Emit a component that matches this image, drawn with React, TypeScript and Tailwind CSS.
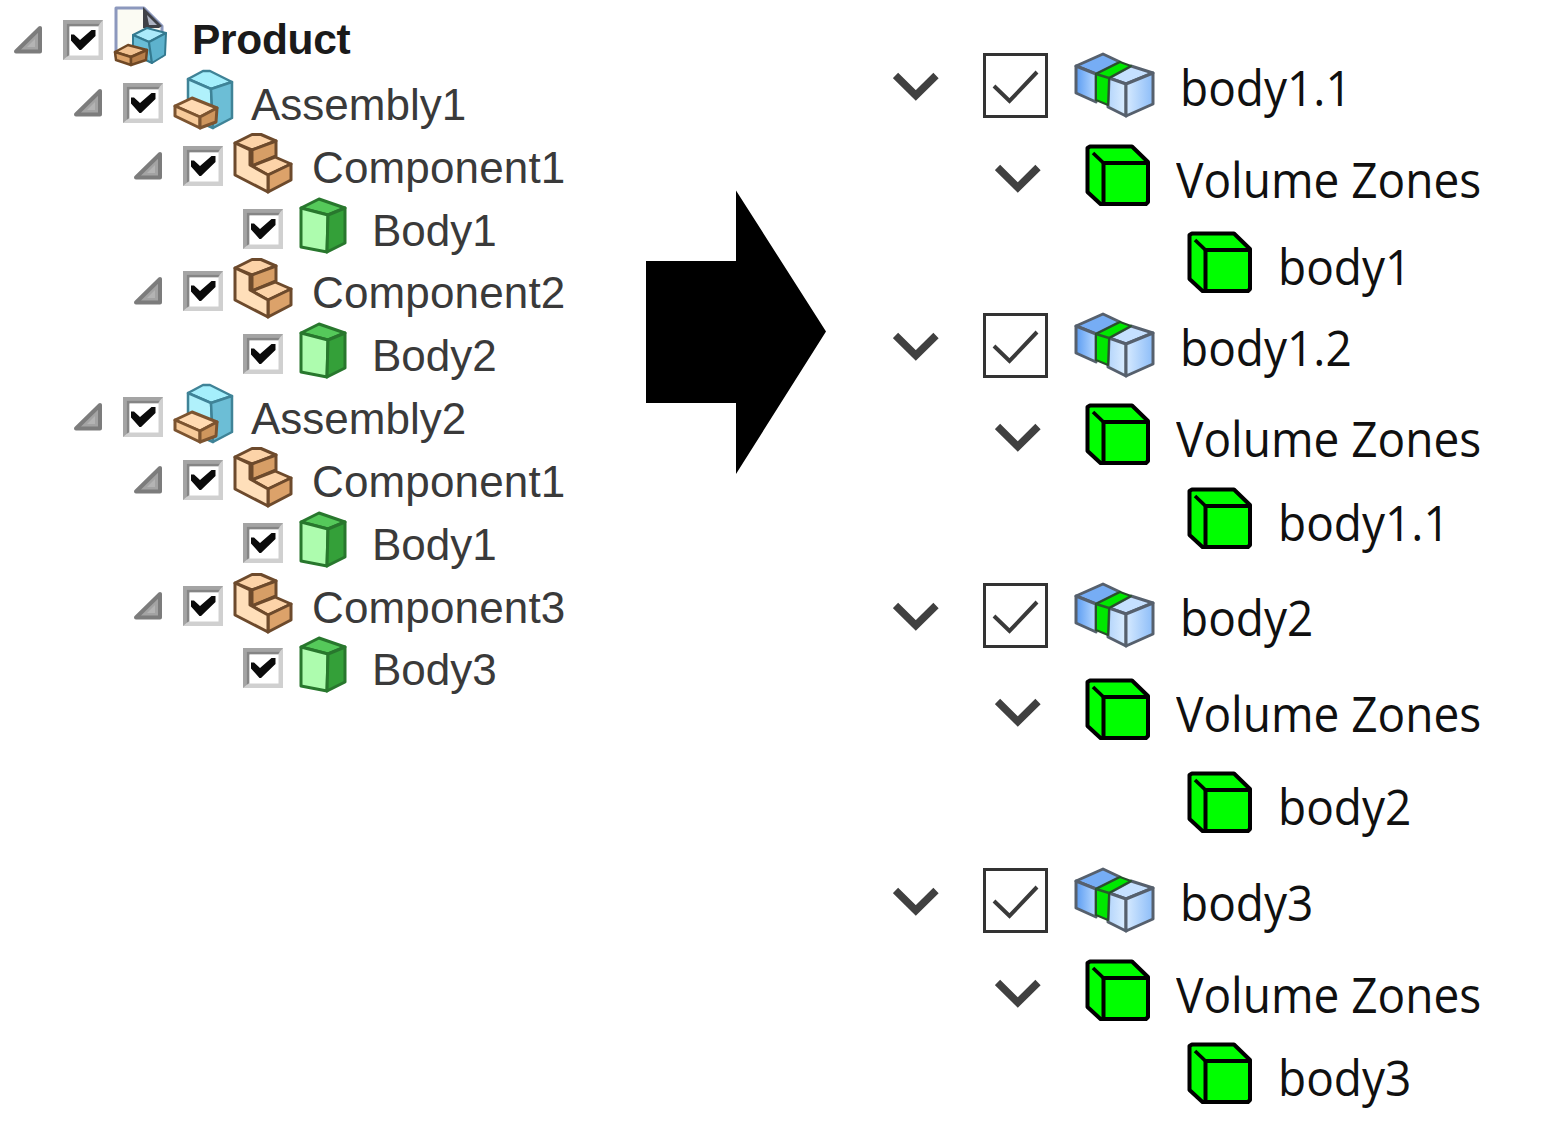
import React from "react";

type Kind = "product" | "assembly" | "component" | "body";

function Expander() {
  return (
    <svg className="shrink-0" width="30" height="30" viewBox="0 0 30 30">
      <path d="M3 26.5 L27 3 V26.5 Z" fill="#a3a3a3" stroke="#7c7c7c" strokeWidth="4" strokeLinejoin="round" />
      <path d="M14 22 L22 14 V22 Z" fill="#b4b4b4" />
    </svg>
  );
}

function ClassicCheck() {
  return (
    <svg width="42" height="42" viewBox="0 0 42 42" className="shrink-0">
      <rect x="1" y="1" width="40" height="40" fill="#d0d0d0" />
      <path d="M1 41 V1 H41 L38 4.500 H4.500 V38 Z" fill="#a4a4a4" />
      <path d="M4.500 38 V4.500 H38 L36 7.500 H7.500 V36 Z" fill="#858585" />
      <rect x="7.500" y="7.500" width="29" height="29" fill="#fff" />
      <path d="M9 15.500 L12 15.500 L18 21 L29.500 11 L33.500 11 V17 L19 31 L17.500 31 L9 21.500 Z" fill="#0a0a0a" />
    </svg>
  );
}

function ProductIcon() {
  return (
    <svg width="60" height="62" viewBox="0 0 60 62" strokeLinejoin="round" className="shrink-0">
      <path d="M3 2 H31 L49 20 V50 H3 Z" fill="#fbfbf3" stroke="#8c98bd" strokeWidth="3" />
      <path d="M30 1 L49 20 L46 22 H30 Z" fill="#3f4146" />
      <path d="M34 9 L44 19 H36 Z" fill="#aeb4c2" />
      <g stroke="#347a90" strokeWidth="2">
        <path d="M20 29 L34 22 L53 27 L36 36 Z" fill="#abeafa" />
        <path d="M20 29 L36 36 L39 57 L20 48 Z" fill="#69bdd6" />
        <path d="M36 36 L53 27 L52 49 L39 57 Z" fill="#5db2cd" />
      </g>
      <g stroke="#6f4825" strokeWidth="2.500">
        <path d="M2 46 L15 39 L34 44 L18 51 Z" fill="#f2c291" />
        <path d="M2 46 L18 51 V59 L3 54 Z" fill="#dca36a" />
        <path d="M18 51 L34 44 L33 54 L18 59 Z" fill="#b87f4a" />
      </g>
    </svg>
  );
}

function AssemblyIcon() {
  return (
    <svg width="61" height="61" viewBox="0 0 61 61" strokeLinejoin="round" className="shrink-0">
      <g stroke="#3f8397" strokeWidth="2.500">
        <path d="M15 10 L30 2 H37 L59 13 L38 20 Z" fill="#a5effc" />
        <path d="M15 10 L38 20 L40 59 L15 48 Z" fill="#b0f1fb" />
        <path d="M38 20 L59 13 V49 L40 59 Z" fill="#6cbed6" />
      </g>
      <g stroke="#7c5430" strokeWidth="3">
        <path d="M2 37 L19 29 L44 39 L27 48 Z" fill="#ffdab2" />
        <path d="M2 37 L27 48 V59 L2 47 Z" fill="#f7cb9b" />
        <path d="M27 48 L44 39 L43 53 L27 59 Z" fill="#cf965d" />
      </g>
    </svg>
  );
}

function ComponentIcon() {
  return (
    <svg
      width="60"
      height="62"
      viewBox="0 0 60 62"
      strokeLinejoin="round"
      stroke="#6d4a2c"
      strokeWidth="3"
      className="shrink-0"
    >
      <path d="M2 11 L19 2.500 H28 L43 9 L19 18 Z" fill="#fcd3a8" />
      <path d="M19 18 L43 9 V24 L19 34 Z" fill="#d79e66" />
      <path d="M19 34 L42 25 L58 32 L35 43 Z" fill="#fcd3a8" />
      <path d="M35 43 L58 32 V48 L35 60 Z" fill="#dca26a" />
      <path d="M2 11 L17 18 V33 L35 43 V60 L2 43 Z" fill="#ffdfba" />
    </svg>
  );
}

function BodyIcon() {
  return (
    <svg
      width="48"
      height="57"
      viewBox="0 0 48 57"
      strokeLinejoin="round"
      stroke="#28772d"
      strokeWidth="3"
      className="shrink-0"
    >
      <path d="M2 11 L20 2 L46 11 L29 18 Z" fill="#55c95a" />
      <path d="M2 11 L29 18 L28 55 L2 50 Z" fill="#adfcae" />
      <path d="M29 18 L46 11 V46 L28 55 Z" fill="#34a039" />
    </svg>
  );
}

function Chevron() {
  return (
    <svg width="46" height="30" viewBox="0 0 46 30" fill="none" stroke="#404040" strokeWidth="7.500">
      <path d="M2.500 3.500 L22.800 23.500 L43 3.500" />
    </svg>
  );
}

function FlatCheck() {
  return (
    <div className="flex size-[65px] shrink-0 items-center justify-center border-3 border-[#333]">
      <svg width="59" height="59" viewBox="0 0 59 59" fill="none" stroke="#3a3a3a" strokeWidth="4">
        <path d="M8 30 L23.500 45 L51 16" />
      </svg>
    </div>
  );
}

function MeshBodyIcon() {
  return (
    <svg width="83" height="69" viewBox="0 0 83 69" strokeLinejoin="round">
      <defs>
        <linearGradient id="deep">
          <stop offset="0" stopColor="#5b9cf2" />
          <stop offset="1" stopColor="#b8d9ff" />
        </linearGradient>
        <linearGradient id="light">
          <stop offset="0" stopColor="#d6eaff" />
          <stop offset="1" stopColor="#8dbdf8" />
        </linearGradient>
        <linearGradient id="pale">
          <stop offset="0" stopColor="#b4d5fb" />
          <stop offset="1" stopColor="#dceeff" />
        </linearGradient>
      </defs>
      <g stroke="#56606d" strokeWidth="3">
        <path d="M3 15 L30 3 L47 11 L23 23 Z" fill="#76adf5" />
        <path d="M3 15 L23 23 V51 L3 42 Z" fill="url(#deep)" />
        <path d="M36 27 L58 15 L80 22 L53 33 Z" fill="#c5e0ff" />
        <path d="M36 27 L53 33 V65 L35 56 Z" fill="url(#pale)" />
        <path d="M53 33 L80 22 V53 L53 65 Z" fill="url(#light)" />
      </g>
      <path d="M23 23 L47 11 L58 15 L36 27 L35 54 L23 49 Z" fill="#00e800" stroke="#28502b" strokeWidth="2" />
      <path d="M23 23 L36 27" stroke="#285c2b" strokeWidth="2.500" />
    </svg>
  );
}

function ZoneIcon() {
  return (
    <svg width="66" height="64" viewBox="0 0 66 64" stroke="#000" strokeWidth="4" strokeLinejoin="round">
      <path d="M2.500 4 L5 2.500 H47 L63 18 V58 L61 60 H15.500 L2.500 48 Z" fill="#00ff00" />
      <path d="M18.500 60 V19 H63" fill="none" />
      <path d="M8 9 L18.500 19" fill="none" strokeWidth="3.600" />
    </svg>
  );
}

const indents = {
  product: "pl-[13px]",
  assembly: "pl-[73px]",
  component: "pl-[133px]",
  body: "pl-[242px]",
};

const labels = {
  product: "ml-[19px] mt-[6px] text-[42.500px] font-bold tracking-[-0.300px] text-[#1a1a1a]",
  assembly: "ml-[17px] mt-[8px] text-[44px] text-[#3a3a3a]",
  component: "ml-[19px] mt-[8px] text-[44px] tracking-[0.150px] text-[#3a3a3a]",
  body: "ml-[25px] mt-[8px] text-[44px] text-[#3a3a3a]",
};

function SourceRow({ kind, text }: { kind: Kind; text: string }) {
  return (
    <div className={`flex h-[62.850px] items-start ${indents[kind]}`}>
      {kind !== "body" && (
        <div className="mt-[16px] mr-[19px]">
          <Expander />
        </div>
      )}
      <div className="mt-[10px]">
        <ClassicCheck />
      </div>
      <div className={kind === "body" ? "mt-[-1px] ml-[15px]" : "mt-[-3px] ml-[9px]"}>
        {kind === "product" && <ProductIcon />}
        {kind === "assembly" && <AssemblyIcon />}
        {kind === "component" && <ComponentIcon />}
        {kind === "body" && <BodyIcon />}
      </div>
      <span className={`leading-[50px] whitespace-nowrap ${labels[kind]}`}>{text}</span>
    </div>
  );
}

const source: [Kind, string][] = [
  ["product", "Product"],
  ["assembly", "Assembly1"],
  ["component", "Component1"],
  ["body", "Body1"],
  ["component", "Component2"],
  ["body", "Body2"],
  ["assembly", "Assembly2"],
  ["component", "Component1"],
  ["body", "Body1"],
  ["component", "Component3"],
  ["body", "Body3"],
];

function Label({ text }: { text: string }) {
  return (
    <span className="origin-left scale-x-[0.92] text-[50px] leading-[64px] whitespace-nowrap text-[#101010]">
      {text}
    </span>
  );
}

function BodyRow({ text, gap }: { text: string; gap: string }) {
  return (
    <div className={`flex h-[64px] items-center ${gap}`}>
      <div className="pt-[4px]">
        <Chevron />
      </div>
      <div className="ml-[44px]">
        <FlatCheck />
      </div>
      <div className="mr-[24px] ml-[25px] shrink-0">
        <MeshBodyIcon />
      </div>
      <div className="flex pt-[4px]">
        <Label text={text} />
      </div>
    </div>
  );
}

function ZoneRow({ text, gap }: { text: string; gap: string }) {
  return (
    <div className={`flex h-[64px] items-center pl-[102px] ${gap}`}>
      <div className="pt-[8px]">
        <Chevron />
      </div>
      <div className="mr-[25px] ml-[44px] shrink-0 pt-[2px]">
        <ZoneIcon />
      </div>
      <div className="flex pt-[8px]">
        <Label text={text} />
      </div>
    </div>
  );
}

function LeafRow({ text, gap }: { text: string; gap: string }) {
  return (
    <div className={`flex h-[64px] items-center pl-[294px] ${gap}`}>
      <div className="mr-[25px] shrink-0 pt-[2px]">
        <ZoneIcon />
      </div>
      <div className="flex pt-[8px]">
        <Label text={text} />
      </div>
    </div>
  );
}

export default function App() {
  return (
    <main className="flex h-[1128px] w-[1561px] overflow-hidden bg-white">
      <section className="w-[646px] shrink-0 pt-[9px] font-['Liberation_Sans',sans-serif]">
        {source.map(([kind, text], i) => (
          <SourceRow key={i} kind={kind} text={text} />
        ))}
      </section>

      <svg className="mt-[190px] shrink-0" width="180" height="284" viewBox="0 0 180 284">
        <path d="M0 71 H90 V0.500 L180 141.500 L90 284 V213 H0 Z" fill="#000" />
      </svg>

      <section className="ml-[67px] font-['Open_Sans',sans-serif]">
        <BodyRow text="body1.1" gap="mt-[53px]" />
        <ZoneRow text="Volume Zones" gap="mt-[26px]" />
        <LeafRow text="body1" gap="mt-[23px]" />
        <BodyRow text="body1.2" gap="mt-[19px]" />
        <ZoneRow text="Volume Zones" gap="mt-[25px]" />
        <LeafRow text="body1.1" gap="mt-[20px]" />
        <BodyRow text="body2" gap="mt-[33px]" />
        <ZoneRow text="Volume Zones" gap="mt-[30px]" />
        <LeafRow text="body2" gap="mt-[29px]" />
        <BodyRow text="body3" gap="mt-[34px]" />
        <ZoneRow text="Volume Zones" gap="mt-[26px]" />
        <LeafRow text="body3" gap="mt-[19px]" />
      </section>
    </main>
  );
}
